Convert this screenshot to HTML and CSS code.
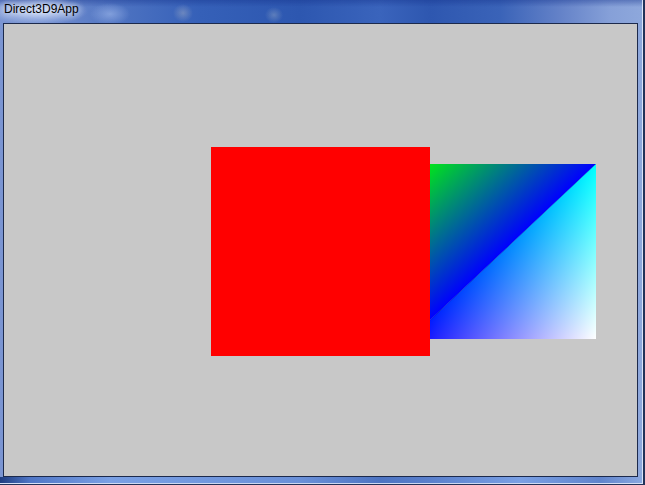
FILE: index.html
```html
<!DOCTYPE html>
<html>
<head>
<meta charset="utf-8">
<title>Direct3D9App</title>
<link rel="stylesheet" href="styles.css">
</head>
<body>
<div class="window">
  <div class="titlebar"><span class="title">Direct3D9App</span></div>
  <div class="client">
    <svg class="scene" width="633" height="452" viewBox="0 0 633 452">
      <defs>
        <linearGradient id="upper" x1="0" y1="0" x2="0.5" y2="0.5">
          <stop offset="0" stop-color="#00ff00"/>
          <stop offset="1" stop-color="#0000ff"/>
        </linearGradient>
        <linearGradient id="lowerBase" x1="0" y1="0" x2="1" y2="0">
          <stop offset="0" stop-color="#0000ff"/>
          <stop offset="1" stop-color="#00ffff"/>
        </linearGradient>
        <linearGradient id="lowerRed" x1="0.5" y1="0.5" x2="1" y2="1">
          <stop offset="0" stop-color="#000000"/>
          <stop offset="1" stop-color="#ff0000"/>
        </linearGradient>
      </defs>
      <g class="quad">
        <path d="M406,140 L592,140 L406,315 Z" fill="url(#upper)"/>
        <path d="M592,140 L592,315 L406,315 Z" fill="url(#lowerBase)"/>
        <path class="screen" d="M592,140 L592,315 L406,315 Z" fill="url(#lowerRed)"/>
      </g>
      <rect x="207" y="123" width="219" height="209" fill="#ff0000"/>
    </svg>
  </div>
</div>
</body>
</html>
```
FILE: styles.css
```css
html, body {
  margin: 0;
  padding: 0;
}
body {
  width: 645px;
  height: 485px;
  background: #22335a;
  overflow: hidden;
}
.window {
  box-sizing: border-box;
  width: 643px;
  height: 484px;
  display: flex;
  flex-direction: column;
  padding: 0 4px 6px 3px;
  border-right: 1px solid rgba(235, 242, 255, 0.85);
  border-bottom: 1px solid rgba(235, 242, 255, 0.85);
  background:
    linear-gradient(90deg, #1f3d80 0, #4f76c6 30px, #7aa0e4 110px, #6a90d8 300px, #4d74c2 380px, #5a80cc 430px, #7aa0e4 520px, #6084cc 600px, #8aa8e0 642px) left bottom / 100% 6px no-repeat,
    radial-gradient(ellipse 50px 14px at 38px 11px, rgba(205, 220, 250, 0.95), rgba(205, 220, 250, 0) 100%),
    radial-gradient(ellipse 20px 11px at 110px 14px, rgba(140, 168, 225, 0.8), rgba(140, 168, 225, 0) 100%),
    radial-gradient(ellipse 10px 9px at 183px 13px, rgba(140, 158, 195, 0.6), rgba(140, 158, 195, 0) 100%),
    radial-gradient(ellipse 9px 8px at 274px 15px, rgba(130, 155, 195, 0.55), rgba(130, 155, 195, 0) 100%),
    linear-gradient(180deg, rgba(20, 50, 140, 0.4) 0, rgba(20, 50, 140, 0) 7px),
    linear-gradient(90deg, #7b95d2 0, #6a88cc 60px, #4a70c0 130px, #3560b8 200px, #2d57b0 300px, #3a64bc 380px, #2e57b0 430px, #3a63b8 500px, #6482c8 560px, #86a0d8 610px, #8ea8dc 643px);
}
.titlebar {
  height: 23px;
  flex: none;
  box-sizing: border-box;
  padding: 2px 0 0 1px;
  font-family: "Liberation Sans", Arial, sans-serif;
  font-size: 12px;
  line-height: 14px;
  color: #000;
}
.title {
  text-shadow: 0 0 6px rgba(255, 255, 255, 0.9), 0 0 10px rgba(255, 255, 255, 0.6);
}
.client {
  flex: 1;
  border: 1px solid #1c2a4c;
  background: #c8c8c8;
  overflow: hidden;
}
.scene {
  display: block;
}
.quad {
  isolation: isolate;
}
.screen {
  mix-blend-mode: screen;
}
```
